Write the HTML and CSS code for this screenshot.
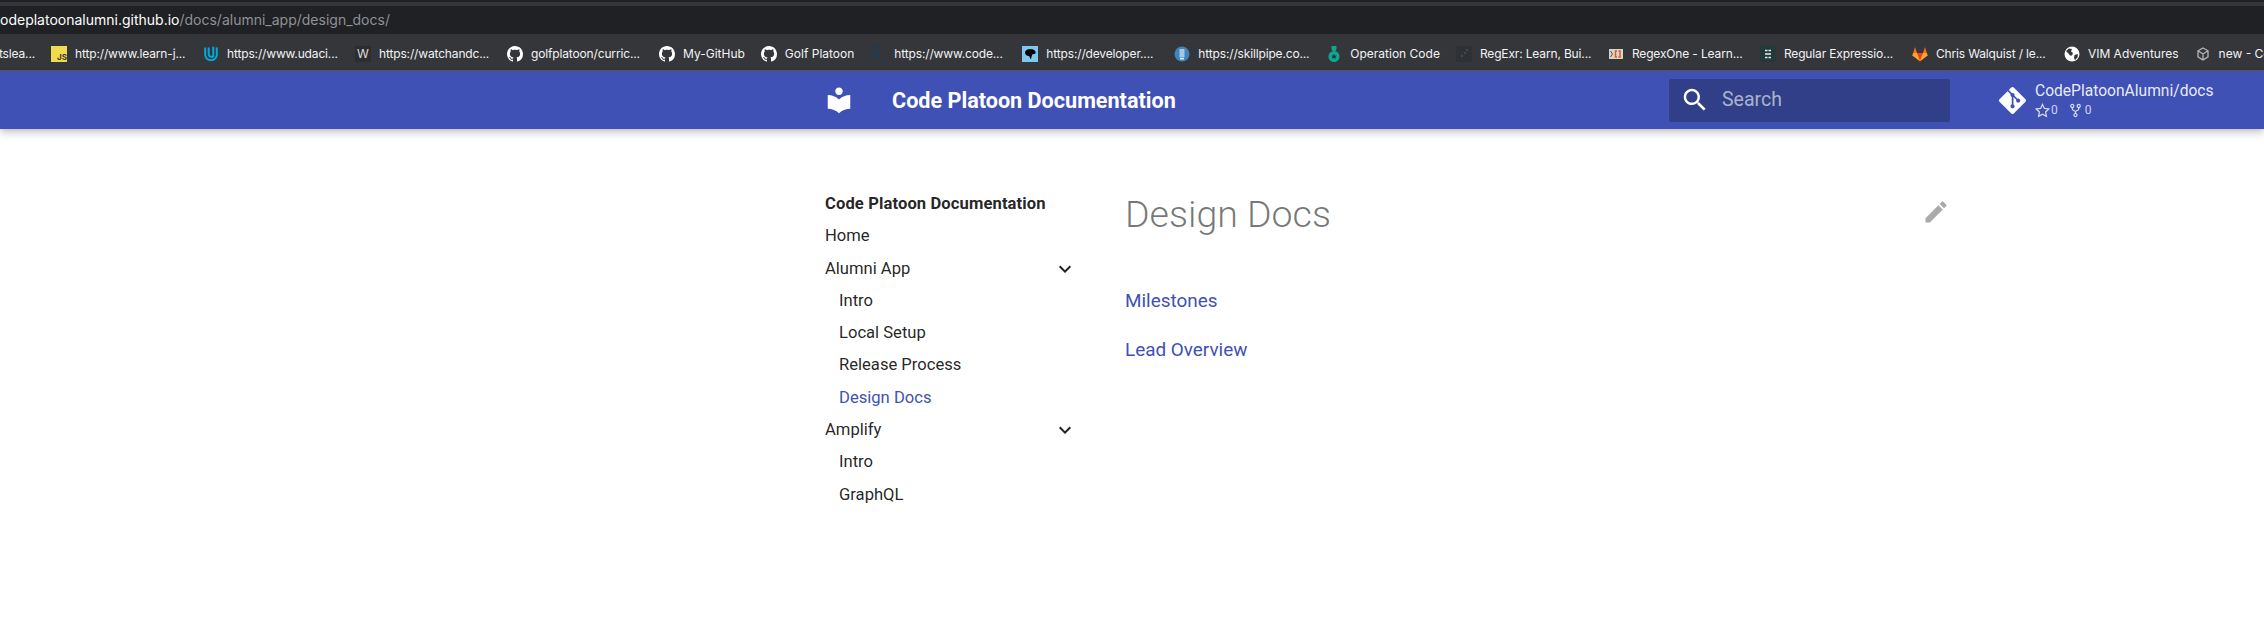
FILE: index.html
```html
<!DOCTYPE html>
<html>
<head>
    <meta charset="UTF-8">
    <meta name="viewport" content="width=device-width, initial-scale=1.0">
    <title>Design Docs - Code Platoon Documentation</title>
    <link rel="stylesheet" href="styles.css">
</head>
<body>
    <svg class="defs" width="0" height="0">
        <symbol id="github" viewBox="0 0 16 16">
            <path d="M8 0C3.58 0 0 3.58 0 8c0 3.54 2.29 6.53 5.47 7.59.4.07.55-.17.55-.38 0-.19-.01-.82-.01-1.49-2.01.37-2.53-.49-2.69-.94-.09-.23-.48-.94-.82-1.13-.28-.15-.68-.52-.01-.53.63-.01 1.08.58 1.23.82.72 1.21 1.87.87 2.33.66.07-.52.28-.87.51-1.07-1.78-.2-3.64-.89-3.64-3.95 0-.87.31-1.59.82-2.15-.08-.2-.36-1.02.08-2.12 0 0 .67-.21 2.2.82.64-.18 1.32-.27 2-.27.68 0 1.36.09 2 .27 1.53-1.04 2.2-.82 2.2-.82.44 1.1.16 1.92.08 2.12.51.56.82 1.27.82 2.15 0 3.07-1.87 3.75-3.65 3.95.29.25.54.73.54 1.48 0 1.07-.01 1.93-.01 2.2 0 .21.15.46.55.38A8.013 8.013 0 0016 8c0-4.42-3.58-8-8-8z"/>
        </symbol>
        <symbol id="chevron" viewBox="0 0 24 24">
            <path d="M7.41 8.59L12 13.17l4.59-4.58L18 10l-6 6-6-6 1.41-1.41z"/>
        </symbol>
    </svg>

    <!-- browser chrome -->
    <div class="tabstrip"></div>
    <div class="addressbar">
        <span class="host">codeplatoonalumni.github.io</span><span class="path">/docs/alumni_app/design_docs/</span>
    </div>
    <div class="bookmarks">
        <div class="bm"><span class="fav"></span><span class="bm-label cut right">tslea...</span></div>
        <div class="bm">
            <span class="fav fav-js">JS</span>
            <span class="bm-label cut">http://www.learn-j...</span>
        </div>
        <div class="bm">
            <svg class="fav" viewBox="0 0 16 16"><path d="M2.2 1.5v7.2c0 3 2.5 5.6 5.8 5.6s5.800-2.600 5.800-5.600V1.500M5.700 1.500v6.800c0 2.200 2.500 3 4.600 2V0.800" fill="none" stroke="#02a9e0" stroke-width="2"/></svg>
            <span class="bm-label cut">https://www.udaci...</span>
        </div>
        <div class="bm">
            <span class="fav fav-w">W</span>
            <span class="bm-label cut">https://watchandc...</span>
        </div>
        <div class="bm">
            <svg class="fav fav-white"><use href="#github"/></svg>
            <span class="bm-label cut">golfplatoon/curric...</span>
        </div>
        <div class="bm">
            <svg class="fav fav-white"><use href="#github"/></svg>
            <span class="bm-label">My-GitHub</span>
        </div>
        <div class="bm">
            <svg class="fav fav-white"><use href="#github"/></svg>
            <span class="bm-label">Golf Platoon</span>
        </div>
        <div class="bm">
            <svg class="fav" viewBox="0 0 16 16"><path d="M2 1h7v12H2zM5 5h2v4H5zM10 15h5" fill="none" stroke="#1d3d52" stroke-width="1.200"/></svg>
            <span class="bm-label cut">https://www.code...</span>
        </div>
        <div class="bm">
            <svg class="fav" viewBox="0 0 16 16"><path d="M0 0h16v16H0z" fill="#7cc8ee"/><path d="M3 6c1-3 6-4 9-2 2 1 2 3 1 4-1 0-3 0-3 1l-1 4c-1 0-1-2-2-3-2 0-4-1-4-4z" fill="#000"/></svg>
            <span class="bm-label cut">https://developer....</span>
        </div>
        <div class="bm">
            <svg class="fav" viewBox="0 0 16 16"><circle cx="8" cy="8" r="7.500" fill="#3f85bd"/><path d="M5.500 3h5v8.500h-5z" fill="#a6c7e2"/><path d="M6 12h4v1.500H6z" fill="#dce9f3"/></svg>
            <span class="bm-label cut">https://skillpipe.co...</span>
        </div>
        <div class="bm">
            <svg class="fav" viewBox="0 0 16 16"><path d="M5.500 0h5v3l-1 2h-3l-1-2z" fill="#12a594"/><circle cx="8" cy="10.500" r="5.500" fill="#12a594"/><path d="M8 7.800l.9 1.800 1.900.2-1.400 1.300.4 1.900L8 12l-1.800 1 .4-1.900-1.400-1.300 1.900-.2z" fill="#16403c"/></svg>
            <span class="bm-label">Operation Code</span>
        </div>
        <div class="bm">
            <svg class="fav" viewBox="0 0 16 16"><path d="M0 0h16v16H0z" fill="#2e3135"/><path d="M10 3h2v2h-2zM8 6h2v2H8zM5 9h2v2H5z" fill="#44484c"/></svg>
            <span class="bm-label cut">RegExr: Learn, Bui...</span>
        </div>
        <div class="bm">
            <svg class="fav" viewBox="0 0 16 16"><path d="M1 3h14v10H1z" fill="#d9d4c8"/><path d="M2.500 5l2 3-2 3" fill="none" stroke="#555" stroke-width="1"/><path d="M9 5H7.500v6H9M10.500 5H12v6h-1.500" fill="none" stroke="#e0551f" stroke-width="1.400"/></svg>
            <span class="bm-label cut">RegexOne - Learn...</span>
        </div>
        <div class="bm">
            <svg class="fav" viewBox="0 0 16 16"><rect width="16" height="16" rx="3" fill="#24393c"/><path d="M5 4.500h2.500M8.500 4.500H11M5 8h6M5 11.500h2.500M8.500 11.500H11" stroke="#e6eeee" stroke-width="1.400"/></svg>
            <span class="bm-label cut">Regular Expressio...</span>
        </div>
        <div class="bm">
            <svg class="fav" viewBox="0 0 16 16"><path d="M8 15.300L.4 9.600 1.200 7 3 1l2 6h6l2-6 1.800 6 .8 2.600z" fill="#fc6d26"/><path d="M8 15.300L5 7h6z" fill="#e24329"/><path d="M8 15.300L.4 9.600 1.200 7H5zM8 15.300l7.600-5.700-.8-2.600H11z" fill="#fca326"/></svg>
            <span class="bm-label cut">Chris Walquist / le...</span>
        </div>
        <div class="bm">
            <svg class="fav" viewBox="0 0 16 16"><circle cx="8" cy="8" r="7.500" fill="#fff"/><path d="M2 5l3-2.500 3 .5-1 2.500 2 1.500-1 2.500H6L4.500 7.500zM10.500 9l3.500-1-.5 3.500-2.500 2.500-1-2z" fill="#35363a"/></svg>
            <span class="bm-label">VIM Adventures</span>
        </div>
        <div class="bm bm-cube">
            <svg class="fav" viewBox="0 0 16 16"><path d="M8 2l5 2.800v6L8 14l-5-3.200v-6zM3 4.800L8 8l5-3.200M8 8v6" fill="none" stroke="#b5b5b5" stroke-width="1.300"/></svg>
            <span class="bm-label">new - CodeSandbox</span>
        </div>
    </div>

    <!-- site header -->
    <header class="md-header">
        <svg class="logo" viewBox="0 0 24 24"><path d="M12 11.550C9.640 9.350 6.480 8 3 8v11c3.480 0 6.640 1.350 9 3.550 2.360-2.190 5.520-3.550 9-3.550V8c-3.480 0-6.640 1.350-9 3.550zM12 8c1.660 0 3-1.340 3-3s-1.340-3-3-3-3 1.340-3 3 1.340 3 3 3z"/></svg>
        <div class="site-title">Code Platoon Documentation</div>
        <div class="search">
            <svg class="search-icon" viewBox="0 0 24 24"><path d="M15.500 14h-.79l-.28-.27C15.410 12.590 16 11.110 16 9.500 16 5.910 13.090 3 9.500 3S3 5.910 3 9.500 5.910 16 9.500 16c1.610 0 3.090-.59 4.230-1.570l.27.28v.79l5 4.990L20.490 19l-4.990-5zm-6 0C7.010 14 5 11.990 5 9.500S7.010 5 9.500 5 14 7.010 14 9.500 11.990 14 9.500 14z"/></svg>
            <span class="search-text">Search</span>
        </div>
        <div class="repo">
            <svg class="git-icon" viewBox="0 0 24 24"><path d="M23.546 10.930L13.067.452c-.604-.603-1.582-.603-2.188 0L8.708 2.627l2.760 2.760c.645-.215 1.379-.07 1.889.441.516.515.658 1.258.438 1.900l2.658 2.660c.645-.223 1.387-.078 1.900.435.721.720.721 1.884 0 2.604-.719.719-1.881.719-2.600 0-.539-.541-.674-1.337-.404-1.996L12.860 8.955v6.525c.176.086.342.203.488.348.713.721.713 1.883 0 2.600-.719.721-1.889.721-2.609 0-.719-.719-.719-1.879 0-2.598.182-.18.387-.316.605-.406V8.835c-.217-.091-.424-.222-.6-.401-.545-.545-.676-1.342-.396-2.009L7.636 3.700.45 10.881c-.6.605-.6 1.584 0 2.189l10.480 10.477c.604.604 1.582.604 2.186 0l10.430-10.430c.605-.603.605-1.582 0-2.187"/></svg>
            <div class="repo-info">
                <div class="repo-name">CodePlatoonAlumni/docs</div>
                <div class="repo-stats">
                    <svg class="stat-icon" viewBox="0 0 16 16"><path d="M8 1.500l2 4.300 4.700.6-3.400 3.200.9 4.700L8 12l-4.200 2.300.9-4.700L1.300 6.400 6 5.800z"/></svg>
                    <span class="stat-num">0</span>
                    <svg class="stat-icon fork" viewBox="0 0 12 16"><circle cx="2.500" cy="3" r="1.700"/><circle cx="9.500" cy="3" r="1.700"/><circle cx="6" cy="13" r="1.700"/><path d="M2.500 4.700v1.800c0 1.500 3.500 1.500 3.500 3v1.800M9.500 4.700v1.800c0 1.500-3.500 1.500-3.500 3"/></svg>
                    <span class="stat-num">0</span>
                </div>
            </div>
        </div>
    </header>

    <main class="main">
        <nav class="sidebar">
            <div class="nav-title">Code Platoon Documentation</div>
            <a class="nav-link">Home</a>
            <a class="nav-link has-sub">Alumni App <svg class="chevron"><use href="#chevron"/></svg></a>
            <a class="nav-link sub">Intro</a>
            <a class="nav-link sub">Local Setup</a>
            <a class="nav-link sub">Release Process</a>
            <a class="nav-link sub active">Design Docs</a>
            <a class="nav-link has-sub">Amplify <svg class="chevron"><use href="#chevron"/></svg></a>
            <a class="nav-link sub">Intro</a>
            <a class="nav-link sub">GraphQL</a>
        </nav>
        <article class="content">
            <div class="content-head">
                <h1>Design Docs</h1>
                <svg class="edit" viewBox="0 0 24 24"><path d="M3 17.250V21h3.750L17.810 9.940l-3.750-3.750L3 17.250zM20.710 7.040c.39-.39.39-1.020 0-1.410l-2.340-2.340c-.39-.39-1.020-.39-1.410 0l-1.830 1.830 3.750 3.750 1.830-1.830z"/></svg>
            </div>
            <p><a href="#">Milestones</a></p>
            <p><a href="#">Lead Overview</a></p>
        </article>
    </main>
</body>
</html>
```

FILE: styles.css
```css
body {
    margin: 0;
    background: #fff;
    font-family: Roboto, 'Liberation Sans', sans-serif;
    overflow: hidden;
}

.defs {
    position: absolute;
}

/* Browser chrome */
.tabstrip {
    height: 2px;
    background: #202124;
    border-bottom: 4px solid #35363a;
}

.addressbar {
    height: 28px;
    line-height: 27px;
    margin-left: -8px;
    background: #202124;
    font-family: Inter, 'Liberation Sans', sans-serif;
    font-size: 14px;
    white-space: nowrap;
}

.host {
    color: #fff;
}

.path {
    color: #8e9196;
}

.bookmarks {
    display: flex;
    align-items: center;
    gap: 16px;
    height: 33px;
    padding-top: 3px;
    margin-left: -101px;
    background: #35363a;
    border-bottom: 1px solid #5b5d63;
    font-family: Inter, 'Liberation Sans', sans-serif;
    font-size: 12px;
    color: #f1f3f4;
    white-space: nowrap;
}

.bm {
    display: flex;
    align-items: center;
    gap: 8px;
    flex-shrink: 0;
}

.bm-label.cut {
    width: 112px;
    letter-spacing: -0.15px;
}

.bm-label.right {
    text-align: right;
}

.fav {
    display: block;
    width: 16px;
    height: 16px;
    flex-shrink: 0;
}

.fav-white {
    fill: #fff;
}

.fav-js {
    background: #f0db4f;
    color: #333;
    font-size: 8px;
    font-weight: 700;
    line-height: 22px;
    text-align: right;
    overflow: hidden;
}

.fav-w {
    background: #2c2d30;
    color: #ddd;
    font-size: 12px;
    line-height: 16px;
    text-align: center;
}

/* Site header */
.md-header {
    display: flex;
    align-items: center;
    height: 58px;
    padding-left: 824px;
    background: #3f51b5;
    color: #fff;
    box-shadow: 0 0 4px rgba(0, 0, 0, 0.1), 0 4px 8px rgba(0, 0, 0, 0.2);
}

.logo {
    width: 30px;
    height: 30px;
    fill: #fff;
}

.site-title {
    width: 777px;
    margin-left: 38px;
    font-size: 21.600px;
    font-weight: 700;
}

.search {
    display: flex;
    align-items: center;
    gap: 12px;
    width: 281px;
    height: 43px;
    padding-left: 11px;
    box-sizing: border-box;
    background: #303f87;
    border-radius: 2px;
}

.search-icon {
    width: 30px;
    height: 30px;
    fill: #fff;
}

.search-text {
    position: relative;
    top: -1px;
    font-size: 19.500px;
    color: rgba(255, 255, 255, 0.6);
}

.repo {
    display: flex;
    align-items: center;
    gap: 9px;
    margin-left: 49px;
}

.git-icon {
    width: 27px;
    height: 27px;
    fill: #fff;
}

.repo-name {
    font-size: 15.600px;
    line-height: 20px;
    color: rgba(255, 255, 255, 0.9);
}

.repo-stats {
    display: flex;
    align-items: center;
    height: 18px;
    font-size: 12px;
    color: rgba(255, 255, 255, 0.75);
}

.stat-icon {
    width: 15px;
    height: 15px;
    fill: none;
    stroke: rgba(255, 255, 255, 0.8);
    stroke-width: 1.300;
}

.stat-icon.fork {
    width: 11px;
    margin-left: 12px;
    margin-right: 3px;
}

.stat-num {
    margin-left: 1px;
}

/* Page */
.main {
    display: flex;
    padding: 59px 314px 0 825px;
}

.sidebar {
    flex: 0 0 300px;
    font-size: 16.600px;
    line-height: 32.300px;
    color: rgba(0, 0, 0, 0.87);
}

.nav-title {
    font-weight: 700;
    letter-spacing: 0.1px;
}

.nav-link {
    display: flex;
    align-items: center;
    justify-content: space-between;
    width: 240px;
    height: 32.300px;
}

.nav-link.sub {
    padding-left: 14px;
    width: 226px;
}

.nav-link.active {
    color: #3f51b5;
}

.chevron {
    width: 24px;
    height: 24px;
    margin-right: -12px;
    fill: #222;
}

.content {
    flex: 1;
}

.content-head {
    display: flex;
    justify-content: space-between;
    align-items: flex-start;
    margin-bottom: 47px;
}

.content h1 {
    margin: 0;
    font-size: 37.500px;
    font-weight: 300;
    line-height: 52px;
    color: rgba(0, 0, 0, 0.54);
}

.edit {
    width: 28px;
    height: 28px;
    margin-top: 10px;
    fill: #aaa;
}

.content p {
    margin: 0 0 22px;
    font-size: 18.900px;
    line-height: 27px;
}

.content a {
    color: #3f51b5;
    text-decoration: none;
}
```
